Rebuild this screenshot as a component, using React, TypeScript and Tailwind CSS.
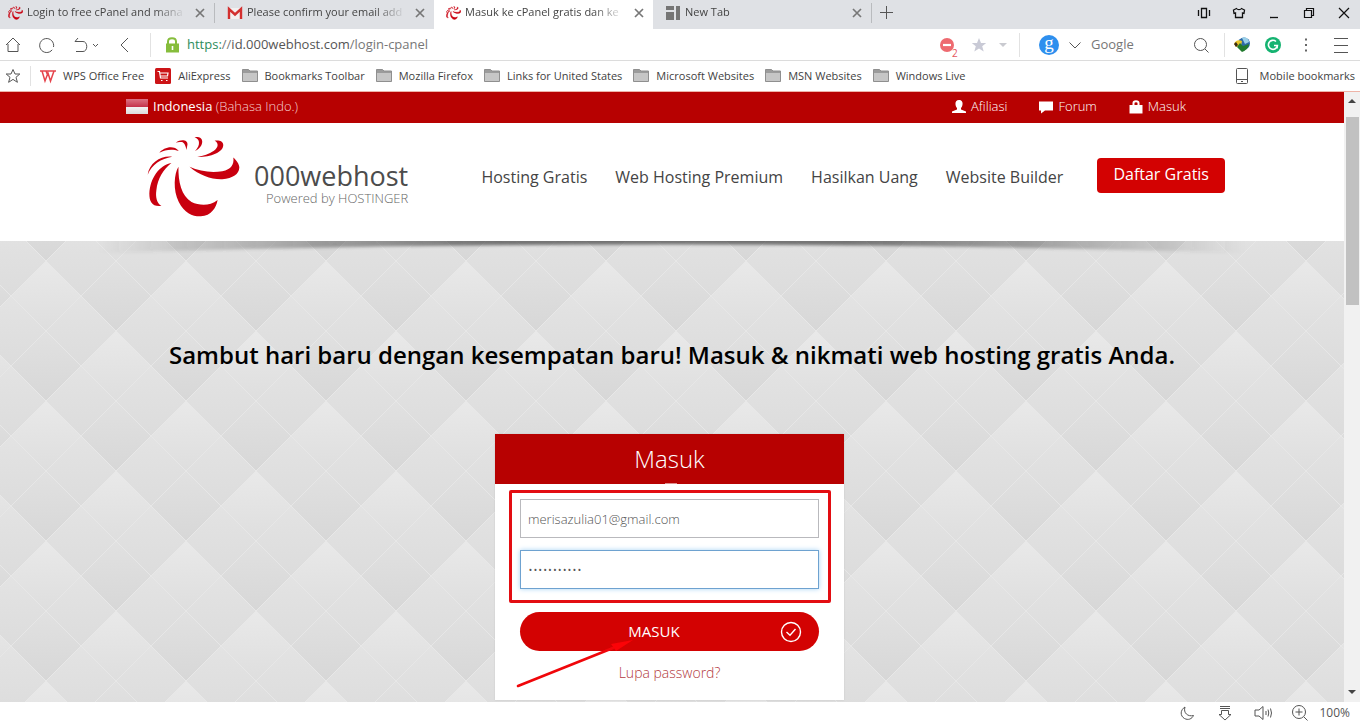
import type { ReactNode } from "react";

const swirl = [
  "M237 230 C224 250 220 300 238 335 C255 368 280 379 304 378 C335 376 350 352 354 329 C330 348 300 346 276 335 C246 318 236 275 237 230Z",
  "M270 230 C300 256 335 268 368 267 C400 264 418 252 419 232 C419 222 410 210 401 202 C404 222 395 238 368 243 C335 249 300 243 270 230Z",
  "M293 201 C330 202 371 188 371 165 C371 153 358 150 345 152 C358 158 357 172 343 182 C328 192 312 197 293 201Z",
  "M286 183 C300 177 309 165 308 153 C307 141 295 139 285 142 C296 146 300 153 298 163 C296 171 292 177 286 183Z",
  "M229 158 C245 146 265 150 264 163 L261 180 C259 168 255 158 247 156 C240 155 234 156 229 158Z",
  "M180 188 C192 173 222 163 238 183 C220 176 198 178 180 188Z",
  "M145 254 C150 218 185 196 218 200 C185 206 158 222 145 254Z",
  "M216 219 C180 225 152 265 150 310 C150 335 158 350 186 347 C172 338 168 320 171 300 C175 265 192 238 216 219Z",
];

function Swirl({ className, bold }: { className: string; bold?: boolean }) {
  return (
    <svg viewBox="143 138 278 242" className={className} fill="#c9000f" stroke="#c9000f" strokeWidth={bold ? 7 : 0} aria-hidden="true">
      {swirl.map((d) => (
        <path key={d} d={d} />
      ))}
    </svg>
  );
}

function Line({ children, size = 16, className = "" }: { children: ReactNode; size?: number; className?: string }) {
  return (
    <svg width={size} height={size} viewBox={`0 0 ${size} ${size}`} fill="none" stroke="currentColor" className={`shrink-0 ${className}`} aria-hidden="true">
      {children}
    </svg>
  );
}

function Folder() {
  return (
    <Line>
      <path d="M0.5 13.5V1.5H6.5L8 3H15.5V13.5Z" fill="#9b9b9b" stroke="#8f8f8f" />
      <path d="M1 5H15V13H1Z" fill="#c6c6c6" stroke="none" />
    </Line>
  );
}

function GmailIcon() {
  return (
    <Line>
      <path d="M1 3H15V14H1Z" fill="#f3f0f0" stroke="none" />
      <path d="M2 14V4L8 9.5L14 4V14" stroke="#d3302f" strokeWidth="2.4" />
    </Line>
  );
}

function NewTabIcon() {
  return (
    <Line>
      <path d="M1 1H9V5H1ZM1 7H9V15H1ZM11 1H15V15H11Z" fill="#757575" stroke="none" />
    </Line>
  );
}

function Tab({ icon, title, active, first, divider }: { icon: ReactNode; title: string; active?: boolean; first?: boolean; divider?: boolean }) {
  return (
    <div
      className={`flex min-w-0 items-center pr-2 pb-1 ${first ? "w-[215px] pl-2" : "w-[219px] pl-3"} ${active ? "bg-white" : ""}`}
    >
      {icon}
      <button type="button" className="ml-1 min-w-0 flex-1 overflow-hidden text-left whitespace-nowrap [mask-image:linear-gradient(to_right,black_80%,transparent)]">
        {title}
      </button>
      <button type="button" aria-label={`Close ${title}`} className="ml-2 text-[#777]">
        <Line size={12}>
          <path d="M2 2L10 10M10 2L2 10" strokeWidth="1.7" />
        </Line>
      </button>
      {divider && <span className="-mr-2 ml-2 h-5 w-px bg-[#b9bbbe]" />}
    </div>
  );
}

function TabStrip() {
  return (
    <div className="flex h-[29px] bg-[#dfe1e5]">
      <Tab first divider icon={<Swirl bold className="h-[14px] w-[15px] shrink-0" />} title="Login to free cPanel and mana" />
      <Tab icon={<GmailIcon />} title="Please confirm your email add" />
      <Tab active icon={<Swirl bold className="h-[14px] w-[15px] shrink-0" />} title="Masuk ke cPanel gratis dan ke" />
      <Tab divider icon={<NewTabIcon />} title="New Tab" />
      <button type="button" aria-label="Open tab" className="ml-[7px] pb-1 text-[#555]">
        <Line>
          <path d="M7.5 1V14M1 7.5H14" />
        </Line>
      </button>
      <div className="ml-auto flex items-center gap-[19px] pr-2 pb-1 text-[#111]">
        <button type="button" aria-label="Phone view">
          <Line>
            <path d="M5.5 3.5H10.5V12.5H5.5ZM2.5 5V11M13.5 5V11" strokeWidth="1.3" />
          </Line>
        </button>
        <button type="button" aria-label="Skins">
          <Line>
            <path d="M5.5 3.5L2.5 5L3 8.5L4.5 8V12.5H11.5V8L13 8.5L13.5 5L10.5 3.5C9.5 5 6.5 5 5.5 3.5Z" strokeWidth="1.3" />
          </Line>
        </button>
        <button type="button" aria-label="Minimize">
          <Line>
            <path d="M4 12.5H12" strokeWidth="1.3" />
          </Line>
        </button>
        <button type="button" aria-label="Restore">
          <Line>
            <path d="M3.5 5.5H10.5V12.5H3.5ZM5.5 5V3.5H12.5V10.5H11" strokeWidth="1.2" />
          </Line>
        </button>
        <button type="button" aria-label="Close window">
          <Line>
            <path d="M3 3L13 13M13 3L3 13" strokeWidth="1.2" />
          </Line>
        </button>
      </div>
    </div>
  );
}

function Toolbar() {
  return (
    <div className="flex h-8 items-center border-b border-[#dcdcdc] bg-white pl-1 text-[#555]">
      <button type="button" aria-label="Home">
        <Line size={18}>
          <path d="M2 9L9 2L16 9M4 8V15.5H14V8" />
        </Line>
      </button>
      <button type="button" aria-label="Reload" className="ml-4">
        <Line size={18}>
          <path d="M14.2 13.8A7 7 0 1 1 15.5 11" />
        </Line>
      </button>
      <button type="button" aria-label="Undo" className="ml-4 flex items-center">
        <Line size={18}>
          <path d="M6 2L3 5.5H11C16 5.5 16 15.5 11 15.5H4" />
        </Line>
        <Line size={10}>
          <path d="M3 4L5.5 6.5L8 4" />
        </Line>
      </button>
      <button type="button" aria-label="Back" className="ml-4">
        <Line size={18}>
          <path d="M12 2L5 9L12 16" />
        </Line>
      </button>
      <span className="ml-4 h-6 w-px bg-[#e2e2e2]" />
      <Line size={18} className="ml-3">
        <path d="M5 8V5.5C5 1 13 1 13 5.5V8" stroke="#86bd3c" strokeWidth="2" />
        <path d="M3 7.5H16V16.5H3Z" fill="#86bd3c" stroke="none" />
        <path d="M9.5 10V14" stroke="#fff" strokeWidth="1.6" />
      </Line>
      <div className="ml-[6px] flex-1 text-[13px] text-[#777]">
        <span className="text-[#2d8d5c]">https:</span>//<span className="text-[#555]">id.000webhost.com</span>/login-cpanel
      </div>
      <button type="button" aria-label="Blocked items: 2" className="relative flex w-8 justify-center">
        <Line>
          <circle cx="8" cy="8" r="7" fill="#ee6a70" stroke="none" />
          <path d="M4 8H12" stroke="#fff" strokeWidth="2.2" />
        </Line>
        <span className="absolute top-2 left-[21px] text-[10px] leading-4 text-[#e5555c]">2</span>
      </button>
      <button type="button" aria-label="Add bookmark" className="flex w-8 justify-center">
        <Line>
          <path d="M8 1L10 6H15.2L11.2 9.3L12.7 14.5L8 11.4L3.3 14.5L4.8 9.3L0.8 6H6Z" fill="#c9cad6" stroke="none" />
        </Line>
      </button>
      <button type="button" aria-label="Bookmark options">
        <Line>
          <path d="M4 6H12L8 10Z" fill="#c9cad0" stroke="none" />
        </Line>
      </button>
      <span className="ml-2 h-6 w-px bg-[#e2e2e2]" />
      <span className="ml-[19px] flex size-[20px] justify-center rounded-full bg-[#2e8fee] font-['Liberation_Serif',serif] text-[19px] leading-[15px] text-white">
        g
      </span>
      <button type="button" aria-label="Search engines" className="ml-2">
        <Line>
          <path d="M2.5 5.5L8 11L13.5 5.5" />
        </Line>
      </button>
      <input aria-label="Search" placeholder="Google" className="ml-2 w-[101px] text-[13px] outline-none placeholder:text-[#777]" />
      <button type="button" aria-label="Search now">
        <Line size={18}>
          <circle cx="8.5" cy="8.5" r="6" />
          <path d="M13 13L16.5 16.5" />
        </Line>
      </button>
      <span className="ml-[14px] h-6 w-px bg-[#e2e2e2]" />
      <button type="button" aria-label="Downloader" className="ml-2">
        <Line size={18}>
          <circle cx="11" cy="7.5" r="6" fill="#2d6aa8" stroke="none" />
          <path d="M9 2C12 0 16 3 16 6L12 8L10 4Z" fill="#9bd0e8" stroke="none" />
          <path d="M1 8C3 3 7 4 9 5L8 10L3 11Z" fill="#e8c527" stroke="none" />
          <path d="M4 11L7 7L10 10L16 8C16 12 12 15 9 16Z" fill="#217a2e" stroke="none" />
          <path d="M1 8L3 6L5 9L3 11Z" fill="#3b2a17" stroke="none" />
        </Line>
      </button>
      <button type="button" aria-label="Writing assistant" className="ml-[13px]">
        <Line size={18}>
          <circle cx="9" cy="9" r="8" fill="#15b371" stroke="none" />
          <path d="M12 5.5A4.5 4.5 0 1 0 13.4 9.5H10M13.4 9.5L13 12.5" stroke="#fff" strokeWidth="1.6" />
        </Line>
      </button>
      <button type="button" aria-label="More" className="ml-4">
        <Line>
          <path d="M7 1.5H9V3.5H7ZM7 7H9V9H7ZM7 12.5H9V14.5H7Z" fill="#666" stroke="none" />
        </Line>
      </button>
      <button type="button" aria-label="Menu" className="mr-[11px] ml-[19px]">
        <Line>
          <path d="M1 1.5H15M1 8.5H15M1 15.5H15" />
        </Line>
      </button>
    </div>
  );
}

const folders = ["Bookmarks Toolbar", "Mozilla Firefox", "Links for United States", "Microsoft Websites", "MSN Websites", "Windows Live"];

function BookmarkLink({ icon, label }: { icon: ReactNode; label: string }) {
  return (
    <a href="#" className="flex items-center gap-[7px] whitespace-nowrap">
      {icon}
      {label}
    </a>
  );
}

function Bookmarks() {
  return (
    <div className="flex h-[31px] items-center border-b border-[#eeb4a8] bg-white pl-[5px] font-medium text-[#3f3f3f]">
      <button type="button" aria-label="Bookmarks">
        <Line>
          <path d="M8 1.5L10 6H14.8L11 9.3L12.4 14.3L8 11.4L3.6 14.3L5 9.3L1.2 6H6Z" stroke="#555" />
        </Line>
      </button>
      <span className="ml-[9px] h-5 w-px bg-[#e2e2e2]" />
      <nav className="ml-[9px] flex items-center gap-[11px]">
        <BookmarkLink
          label="WPS Office Free"
          icon={
            <Line>
              <path d="M0 3H16M2 3L5 13L8 5L10.5 13L14 3M6 3L8 8" stroke="#e5444c" strokeWidth="1.5" />
            </Line>
          }
        />
        <BookmarkLink
          label="AliExpress"
          icon={
            <Line>
              <rect width="16" height="16" rx="1.5" fill="#cc1417" stroke="none" />
              <path d="M2.5 3.5H4.5L5.5 10H13M5 5H13L12.5 8H5.5M6 12.5H7.5M11 12.5H12.5" stroke="#fff" strokeWidth="1.2" />
            </Line>
          }
        />
        {folders.map((name) => (
          <BookmarkLink key={name} label={name} icon={<Folder />} />
        ))}
      </nav>
      <a href="#" className="mr-[5px] ml-auto flex items-center gap-[10px]">
        <Line>
          <rect x="2.5" y="0.5" width="11" height="15" rx="1" stroke="#555" />
          <path d="M3 11.5H13M7 13.5H9" stroke="#555" />
        </Line>
        Mobile bookmarks
      </a>
    </div>
  );
}

function TopBar() {
  return (
    <div className="flex h-[31px] items-center bg-[#b70101] pr-[158px] pb-[2px] pl-[126px] text-[13px] font-light text-white">
      <a href="#" className="flex items-center gap-[5px]">
        <span className="flex h-[15px] w-[22px] flex-col">
          <span className="flex-1 bg-linear-to-b from-[#dc7184] to-[#c4304b]" />
          <span className="flex-1 bg-linear-to-b from-[#f4f4f4] to-[#dcdcdc]" />
        </span>
        <span>
          <span className="font-normal">Indonesia</span> <span className="text-[#f6cfcf]">(Bahasa Indo.)</span>
        </span>
      </a>
      <nav className="ml-auto flex items-center gap-8">
        <a href="#" className="flex items-center gap-[5px]">
          <Line size={14}>
            <path d="M7 0C9.5 0 11 2 10.5 4.5C10.3 6.3 9.5 7.5 9 8V9.5L14 11.5V13H0V11.5L5 9.5V8C4.5 7.5 3.7 6.3 3.5 4.5C3 2 4.5 0 7 0Z" fill="#fff" stroke="none" />
          </Line>
          Afiliasi
        </a>
        <a href="#" className="flex items-center gap-[5px]">
          <Line size={14}>
            <path d="M0 1.5H14V10.5H6L2 13.5V10.5H0Z" fill="#fff" stroke="none" />
          </Line>
          Forum
        </a>
        <a href="#" className="flex items-center gap-[5px]">
          <Line size={14}>
            <path d="M4.5 6V3C4.5 0.8 9.5 0.8 9.5 3V6" stroke="#fff" strokeWidth="2" />
            <path d="M0.5 5H13.5V13.5H0.5Z" fill="#fff" stroke="none" />
          </Line>
          Masuk
        </a>
      </nav>
    </div>
  );
}

const menu = ["Hosting Gratis", "Web Hosting Premium", "Hasilkan Uang", "Website Builder"];

function SiteHeader() {
  return (
    <header className="flex h-[118px] bg-white pr-[119px] pl-[147px]">
      <a href="#" className="mt-[13px] flex items-start">
        <Swirl className="h-[81px] w-[93px]" />
        <span className="mt-6 ml-[14px] flex flex-col items-end">
          <span className="text-[27px] leading-8 text-[#4c4c4c]">000webhost</span>
          <span className="text-[13px] leading-3 font-light text-[#666]">Powered by HOSTINGER</span>
        </span>
      </a>
      <nav className="mt-[35px] ml-auto flex items-start">
        <div className="mt-[7px] flex gap-7 text-base text-[#444]">
          {menu.map((m) => (
            <a key={m} href="#" className="whitespace-nowrap">
              {m}
            </a>
          ))}
        </div>
        <button type="button" className="ml-[34px] h-[35px] rounded-[4px] bg-[#d30202] px-4 pb-1 text-base whitespace-nowrap text-white">
          Daftar Gratis
        </button>
      </nav>
    </header>
  );
}

const facetTops = [
  [0, 0],
  [140, 0],
  [70, -70],
  [70, 70],
];

function HeroBackdrop() {
  return (
    <svg className="absolute inset-0 size-full" aria-hidden="true">
      <defs>
        <linearGradient id="facetTop" x1="0" y1="0" x2="0" y2="1">
          <stop offset="0" stopColor="#e9e9e9" />
          <stop offset="1" stopColor="#dedede" />
        </linearGradient>
        <linearGradient id="facetSide" x1="0" y1="0" x2="0" y2="1">
          <stop offset="0" stopColor="#e3e3e3" />
          <stop offset="1" stopColor="#dcdcdc" />
        </linearGradient>
        <linearGradient id="facetBottom" x1="0" y1="0" x2="0" y2="1">
          <stop offset="0" stopColor="#e1e1e1" />
          <stop offset="1" stopColor="#d7d7d7" />
        </linearGradient>
        <pattern id="quilt" x="46" y="20" width="140" height="140" patternUnits="userSpaceOnUse">
          <rect width="140" height="140" fill="#dfdfdf" />
          {facetTops.map(([x, y]) => (
            <g key={`${x},${y}`} transform={`translate(${x} ${y})`}>
              <path d="M0 0L35 35L0 70L-35 35Z" fill="url(#facetTop)" />
              <path d="M-35 35L0 70L-35 105L-70 70Z" fill="url(#facetSide)" />
              <path d="M35 35L70 70L35 105L0 70Z" fill="url(#facetSide)" />
              <path d="M0 70L35 105L0 140L-35 105Z" fill="url(#facetBottom)" />
            </g>
          ))}
          <path d="M0 0L140 140M140 0L0 140" stroke="#e8e8e8" strokeWidth="1" />
          <path d="M0 70L70 0L140 70L70 140Z" fill="none" stroke="#e7e7e7" strokeWidth="1" />
        </pattern>
      </defs>
      <rect width="100%" height="100%" fill="url(#quilt)" />
    </svg>
  );
}

function HeaderShadow() {
  return (
    <svg viewBox="0 0 1344 16" preserveAspectRatio="none" className="absolute inset-x-0 top-0 h-4 w-full" aria-hidden="true">
      <defs>
        <linearGradient id="fade" x1="0" x2="1" y1="0" y2="0">
          <stop offset="0" stopColor="#444" stopOpacity="0" />
          <stop offset="0.18" stopColor="#444" stopOpacity="0.4" />
          <stop offset="0.35" stopColor="#444" stopOpacity="0.7" />
          <stop offset="0.65" stopColor="#444" stopOpacity="0.7" />
          <stop offset="0.82" stopColor="#444" stopOpacity="0.4" />
          <stop offset="1" stopColor="#444" stopOpacity="0" />
        </linearGradient>
        <filter id="soft" x="-5%" width="110%" y="-50%" height="200%">
          <feGaussianBlur stdDeviation="3 1.5" />
        </filter>
      </defs>
      <path d="M100 -4H1244V12Q672 -5 100 12Z" fill="url(#fade)" filter="url(#soft)" />
    </svg>
  );
}

function LoginCard() {
  return (
    <form className="relative mt-16 mr-[5px] w-[349px] bg-white pb-[17px] shadow-[0_0_2px_rgba(0,0,0,0.1)]">
      <h2 className="h-[50px] bg-[#b70101] text-center text-2xl leading-[50px] font-light text-white">Masuk</h2>
      <div className="flex flex-col px-[25px] pt-[15px]">
        <input
          type="email"
          aria-label="Email"
          defaultValue="merisazulia01@gmail.com"
          className="h-[39px] border border-[#b9b9bd] px-[7px] text-[13px] font-light text-[#555] outline-none"
        />
        <input
          type="password"
          aria-label="Password"
          defaultValue="password123"
          className="mt-3 h-[39px] border border-[#6ea2d0] px-[7px] text-[13px] font-light text-[#555] shadow-[0_0_5px_#a9d4f5] outline-none"
        />
        <button type="button" className="mt-[23px] flex h-[39px] items-center rounded-full bg-[#d30202] pr-[17px] pl-2 text-[15px] text-white">
          <span className="flex-1 text-center">MASUK</span>
          <Line size={22}>
            <circle cx="11" cy="11" r="9.5" strokeWidth="1.4" />
            <path d="M6.5 11L10 14.3L15.5 8" strokeWidth="1.4" />
          </Line>
        </button>
        <a href="#" className="mt-3 self-center text-sm font-light text-[#b3393d]">
          Lupa password?
        </a>
      </div>
      <div className="pointer-events-none absolute top-[56px] left-[14px] h-[113px] w-[322px] rounded-[2px] border-3 border-[#e30d12]" />
      <svg className="pointer-events-none absolute top-[200px] left-[20px]" width="120" height="56" aria-hidden="true">
        <path d="M3 52L98 14" stroke="#f0060a" strokeWidth="2.6" strokeLinecap="round" />
        <path d="M118 6L101 17L96 10Z" fill="#fb0307" />
      </svg>
      <span className="absolute top-[49px] left-[170px] h-px w-3 bg-[#dd8f8f]" />
    </form>
  );
}

function ScrollBar() {
  return (
    <div className="flex w-4 flex-col items-center bg-[#f1f1f1]" aria-hidden="true">
      <Line size={16} className="mt-1">
        <path d="M4 7H12L8 3Z" fill="#444" stroke="none" />
      </Line>
      <span className="mt-[5px] h-[188px] w-[13px] bg-[#c1c1c1]" />
      <Line size={16} className="mt-auto">
        <path d="M4 4H12L8 8Z" fill="#444" stroke="none" />
      </Line>
    </div>
  );
}

function StatusBar() {
  return (
    <footer className="flex h-[22px] items-center justify-end bg-white pr-[10px] text-xs text-[#555]">
      <button type="button" aria-label="Night mode">
        <Line>
          <path d="M6 2C1 5 1 11 5.5 13.5C9 15.5 13 14 14.5 10.5C9 12 4 8 6 2Z" />
        </Line>
      </button>
      <button type="button" aria-label="Downloads" className="ml-[22px]">
        <Line>
          <path d="M3 1.5H13M3 3.5H13M4.5 5.5H11.5V9.5H14L8 15L2 9.5H4.5Z" />
        </Line>
      </button>
      <button type="button" aria-label="Sound" className="ml-5">
        <Line size={20}>
          <path d="M2 7H6L10 3.5V16.5L6 13H2ZM13 8V12M15 6.5Q16.5 10 15 13.5M17.5 5.5Q19.5 10 17.5 14.5" />
        </Line>
      </button>
      <button type="button" aria-label="Zoom in" className="ml-[18px] flex items-center gap-[10px] text-[#555]">
        <Line size={18}>
          <circle cx="8" cy="8" r="6.5" />
          <path d="M13 13L16.5 16.5M8 4.5V11.5M4.5 8H11.5" />
        </Line>
        100%
      </button>
    </footer>
  );
}

export default function App() {
  return (
    <div className="flex min-h-screen flex-col bg-white font-['Open_Sans','Noto_Sans',sans-serif] text-[11px] text-[#444]">
      <TabStrip />
      <Toolbar />
      <Bookmarks />
      <div className="flex flex-1">
        <div className="flex min-w-0 flex-1 flex-col">
          <TopBar />
          <SiteHeader />
          <main className="relative flex-1 bg-[#dfdfdf]">
            <HeroBackdrop />
            <HeaderShadow />
            <div className="relative flex flex-col items-center pt-[99px] pb-[2px]">
              <h1 className="px-4 text-center text-2xl leading-[30px] font-semibold text-black">
                Sambut hari baru dengan kesempatan baru! Masuk &amp; nikmati web hosting gratis Anda.
              </h1>
              <LoginCard />
            </div>
          </main>
        </div>
        <ScrollBar />
      </div>
      <StatusBar />
    </div>
  );
}
